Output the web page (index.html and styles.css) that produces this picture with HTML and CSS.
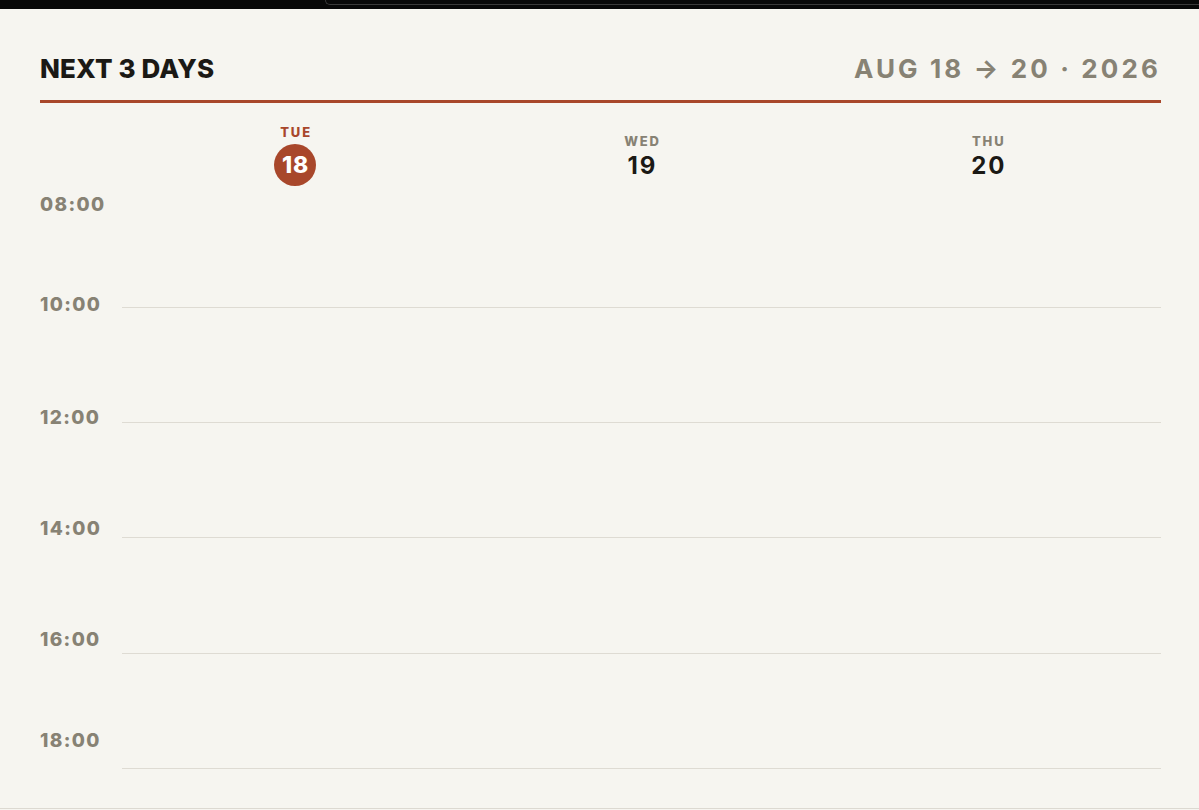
FILE: index.html
```html
<!DOCTYPE html>
<html lang="en">
<head>
<meta charset="utf-8">
<title>Next 3 days</title>
<link rel="stylesheet" href="styles.css">
</head>
<body>
<div class="topbar"><div class="topbar-edge"></div></div>
<main class="panel">
  <header class="head">
    <h1 class="title">NEXT 3 DAYS</h1>
    <div class="range">AUG 18 → 20 · 2026</div>
  </header>
  <div class="days">
    <div class="day today">
      <span class="dow">TUE</span>
      <span class="num">18</span>
    </div>
    <div class="day">
      <span class="dow">WED</span>
      <span class="num">19</span>
    </div>
    <div class="day">
      <span class="dow">THU</span>
      <span class="num">20</span>
    </div>
  </div>
  <div class="body">
    <div class="times">
      <div class="slot s1"><span class="time">08:00</span></div>
      <div class="slot s2"><span class="time">10:00</span></div>
      <div class="slot s3"><span class="time">12:00</span></div>
      <div class="slot s4"><span class="time">14:00</span></div>
      <div class="slot s5"><span class="time">16:00</span></div>
      <div class="slot s6"><span class="time">18:00</span></div>
    </div>
    <div class="grid">
      <div class="row"></div>
      <div class="row"></div>
      <div class="row"></div>
      <div class="row"></div>
      <div class="row"></div>
    </div>
  </div>
</main>
</body>
</html>
```

FILE: styles.css
```css
* { box-sizing: border-box; }

html, body {
  margin: 0;
  padding: 0;
  background: #f6f5f0;
  font-family: Inter, "Noto Sans", "Liberation Sans", sans-serif;
  height: 810px;
  overflow: hidden;
}

.topbar {
  height: 9px;
  background: #080808;
}

.topbar-edge {
  margin-left: 325px;
  height: 5px;
  border-left: 1px solid #3a3a3a;
  border-bottom: 1px solid #3a3a3a;
  border-bottom-left-radius: 8px;
}

.panel {
  height: 800px;
  padding: 44px 38px 0 40px;
  background: #f6f5f0;
  border-bottom: 1px solid #dcd9d1;
}

.head {
  display: flex;
  justify-content: space-between;
  align-items: baseline;
  padding-bottom: 15px;
  border-bottom: 3px solid #a8472b;
}

.title {
  margin: 0;
  font-size: 26px;
  line-height: 31.5px;
  font-weight: 800;
  letter-spacing: 0.005em;
  color: #1b1915;
}

.range {
  font-size: 26px;
  line-height: 31.5px;
  font-weight: 700;
  letter-spacing: 0.12em;
  color: #878274;
}

.days {
  margin-left: 82px;
  height: 90px;
  padding-top: 16px;
  display: grid;
  grid-template-columns: repeat(3, 1fr);
  align-items: center;
}

.day {
  display: flex;
  flex-direction: column;
  align-items: center;
  gap: 6px;
}

.dow {
  font-size: 13px;
  line-height: 14px;
  font-weight: 800;
  letter-spacing: 0.14em;
  color: #878274;
  padding-left: 0.14em;
}

.num {
  font-size: 24px;
  line-height: 24px;
  font-weight: 700;
  letter-spacing: 0.08em;
  padding-left: 0.08em;
  color: #1b1915;
}

.today { gap: 5px; }

.today .dow { color: #a8472b; }

.today .num {
  width: 42px;
  height: 42px;
  border-radius: 50%;
  background: #a8472b;
  color: #ffffff;
  display: flex;
  align-items: center;
  justify-content: center;
  font-size: 23px;
  font-weight: 800;
  letter-spacing: 0.04em;
  padding-left: 0.04em;
}

.body {
  display: flex;
}

.times {
  width: 82px;
  display: flex;
  flex-direction: column;
  padding-top: 2px;
}

.slot { flex: none; }
.s1 { height: 100px; }
.s2 { height: 113px; }
.s3 { height: 111px; }
.s4 { height: 111px; }
.s5 { height: 101px; }
.s6 { height: 40px; }

.time {
  display: block;
  font-size: 19px;
  line-height: 19px;
  font-weight: 800;
  letter-spacing: 0.07em;
  color: #878274;
}

.grid {
  flex: 1;
  display: grid;
  grid-template-rows: repeat(5, 115.25px);
}

.row {
  border-bottom: 1px solid #dedbd3;
}
```
